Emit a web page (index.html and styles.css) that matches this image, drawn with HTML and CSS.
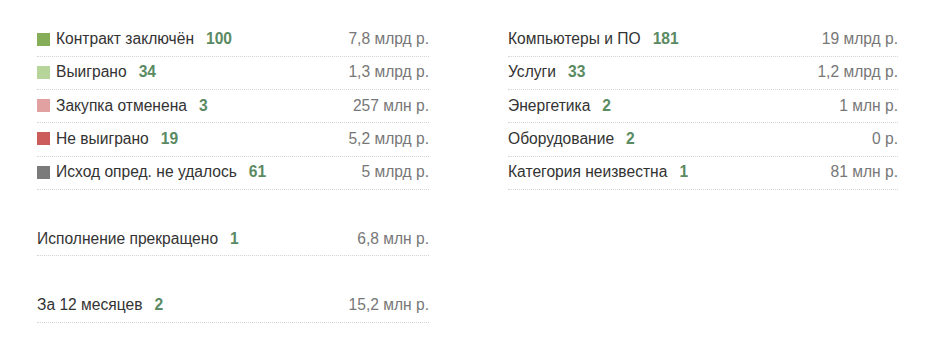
FILE: index.html
```html
<!DOCTYPE html>
<html lang="ru">
<head>
<meta charset="utf-8">
<link rel="stylesheet" href="styles.css">
</head>
<body>
<div class="stats">
  <div class="col">
    <div class="group">
      <div class="row"><span class="sq sq-won"></span><span class="label">Контракт заключён</span><span class="count">100</span><span class="value">7,8 млрд р.</span></div>
      <div class="row"><span class="sq sq-win"></span><span class="label">Выиграно</span><span class="count">34</span><span class="value">1,3 млрд р.</span></div>
      <div class="row"><span class="sq sq-cancel"></span><span class="label">Закупка отменена</span><span class="count">3</span><span class="value">257 млн р.</span></div>
      <div class="row"><span class="sq sq-lost"></span><span class="label">Не выиграно</span><span class="count">19</span><span class="value">5,2 млрд р.</span></div>
      <div class="row"><span class="sq sq-unknown"></span><span class="label">Исход опред. не удалось</span><span class="count">61</span><span class="value">5 млрд р.</span></div>
    </div>
    <div class="group">
      <div class="row"><span class="label">Исполнение прекращено</span><span class="count">1</span><span class="value">6,8 млн р.</span></div>
    </div>
    <div class="group">
      <div class="row"><span class="label">За 12 месяцев</span><span class="count">2</span><span class="value">15,2 млн р.</span></div>
    </div>
  </div>
  <div class="col">
    <div class="group">
      <div class="row"><span class="label">Компьютеры и ПО</span><span class="count">181</span><span class="value">19 млрд р.</span></div>
      <div class="row"><span class="label">Услуги</span><span class="count">33</span><span class="value">1,2 млрд р.</span></div>
      <div class="row"><span class="label">Энергетика</span><span class="count">2</span><span class="value">1 млн р.</span></div>
      <div class="row"><span class="label">Оборудование</span><span class="count">2</span><span class="value">0 р.</span></div>
      <div class="row"><span class="label">Категория неизвестна</span><span class="count">1</span><span class="value">81 млн р.</span></div>
    </div>
  </div>
</div>
</body>
</html>
```
FILE: styles.css
```css
html, body {
  margin: 0;
  padding: 0;
  background: #fff;
}
body {
  font-family: "Liberation Sans", Arial, sans-serif;
  font-size: 15.6px;
  color: #333;
}
.stats {
  display: grid;
  grid-template-columns: 392px 390px;
  column-gap: 79px;
  padding: 23.4px 0 0 37px;
}
.group + .group {
  margin-top: 33.3px;
}
.row {
  box-sizing: border-box;
  height: 33.3px;
  display: flex;
  align-items: center;
  border-bottom: 1px dotted #d4d4d4;
  padding-bottom: 1px;
}
.sq {
  width: 13px;
  height: 13px;
  margin-right: 6px;
  flex: none;
}
.sq-won { background: #86ad58; }
.sq-win { background: #b7d59b; }
.sq-cancel { background: #e2a1a1; }
.sq-lost { background: #cc5b5b; }
.sq-unknown { background: #7b7b7b; }
.label {
  color: #333;
}
.count {
  font-weight: bold;
  color: #5a8a62;
  margin-left: 12px;
}
.value {
  margin-left: auto;
  color: #777;
}
```
